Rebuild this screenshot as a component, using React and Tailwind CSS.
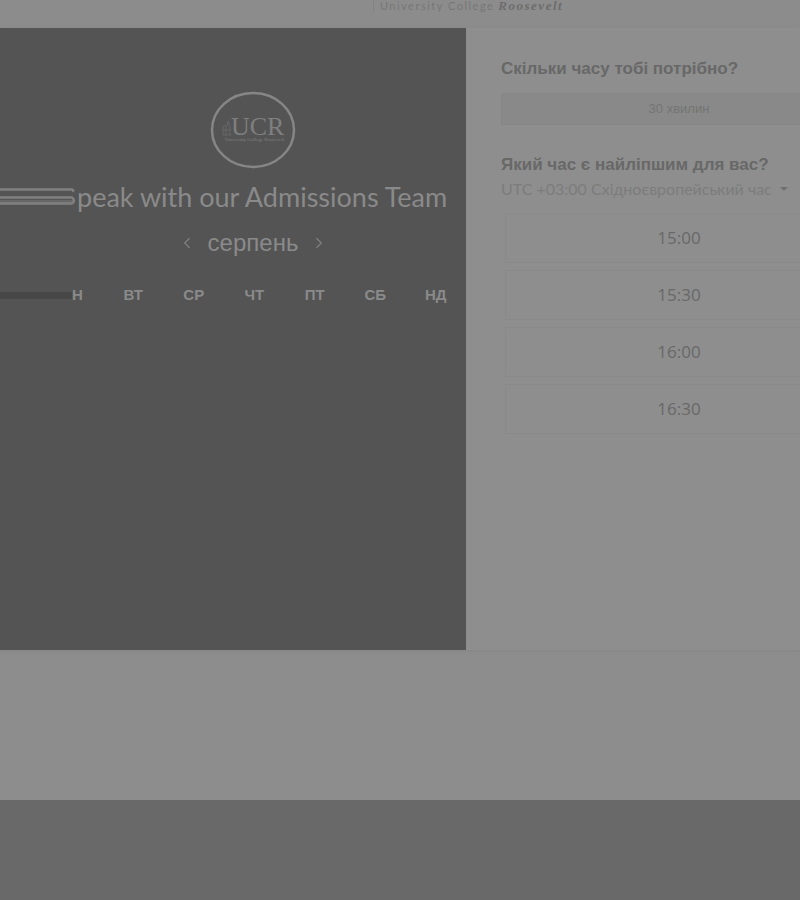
import { ChevronLeft, ChevronRight } from "lucide-react";

const weekdays = ["ВТ", "СР", "ЧТ", "ПТ", "СБ", "НД"];
const times = ["15:00", "15:30", "16:00", "16:30"];

function Seal() {
  return (
    <svg width="86" height="78" viewBox="0 0 86 78" role="img" aria-label="UCR">
      <ellipse cx="43" cy="39" rx="41" ry="37" fill="none" stroke="#868686" strokeWidth="2.5" />
      <path
        d="M13 44V36l2-2 1 2v8M17 35l1-5 2 5v9M13 39h8M13 44h8"
        fill="none"
        stroke="#6c6c6c"
        strokeWidth="0.8"
      />
      <text x="21" y="44" fontFamily="Liberation Serif, serif" fontSize="26" fill="#7f7f7f">
        UCR
      </text>
      <text x="15" y="50" fontFamily="Liberation Serif, serif" fontSize="5" fill="#808080">
        University College Roosevelt
      </text>
    </svg>
  );
}

function Calendar() {
  return (
    <section className="overflow-hidden bg-[#545454] pt-[63px] text-[#8a8a8a]">
      <div className="flex justify-center pl-10">
        <Seal />
      </div>
      <div className="mt-3 flex h-8 items-center">
        <svg className="h-5 w-[77px] shrink-0" viewBox="0 0 77 20" aria-hidden="true">
          <path d="M0 14.5H73" stroke="#686868" strokeWidth="3" />
          <path d="M0 2.5H72l2 2M0 10.5H72q4 3 0 6H0" fill="none" stroke="#808080" strokeWidth="2.5" />
        </svg>
        <h1 className="whitespace-nowrap font-['Lato','Liberation_Sans',sans-serif] text-[27px] leading-8">
          peak with our Admissions Team
        </h1>
      </div>
      <div className="mt-[14px] flex h-8 items-center justify-center gap-3 pl-10">
        <button type="button" aria-label="Попередній місяць" className="text-[#7c7c7c]">
          <ChevronLeft size={18} />
        </button>
        <h2 className="text-2xl leading-8">серпень</h2>
        <button type="button" aria-label="Наступний місяць" className="text-[#7c7c7c]">
          <ChevronRight size={18} />
        </button>
      </div>
      <div className="mt-[26px] flex h-5 items-center text-[15px] font-bold">
        <div className="h-[7px] w-[72px] shrink-0 bg-[#474747]" />
        <span className="w-[31px] shrink-0">Н</span>
        <div className="grid flex-1 grid-cols-6 text-center">
          {weekdays.map((day) => (
            <span key={day}>{day}</span>
          ))}
        </div>
      </div>
    </section>
  );
}

function Booking() {
  return (
    <section className="overflow-hidden bg-[#8e8e8e] pl-[35px] pt-[29px] text-[#686868]">
      <div className="w-[356px]">
        <h2 className="text-[17px] font-bold leading-6">Скільки часу тобі потрібно?</h2>
        <button
          type="button"
          className="mt-3 h-8 w-full rounded-xs border border-[#868686] bg-[#898989] text-[13px] text-[#747474]"
        >
          30 хвилин
        </button>
        <h2 className="mt-7 text-[17px] font-bold leading-6">Який час є найліпшим для вас?</h2>
        <div className="flex h-6 items-center gap-2">
          <select
            aria-label="Часовий пояс"
            className="appearance-none bg-transparent font-['Lato','Liberation_Sans',sans-serif] text-base text-[#7c7c7c]"
          >
            <option>UTC +03:00 Східноєвропейський час</option>
          </select>
          <svg width="8" height="4" viewBox="0 0 8 4" aria-hidden="true">
            <path d="M0 0h8L4 4z" fill="#707070" />
          </svg>
        </div>
        <div className="mt-3 flex flex-col gap-[7px] px-1">
          {times.map((time) => (
            <button
              key={time}
              type="button"
              className="h-[50px] w-full rounded-xs border border-[#898989] font-['Open_Sans','Liberation_Sans',sans-serif] text-[17px] text-[#686868]"
            >
              {time}
            </button>
          ))}
        </div>
      </div>
    </section>
  );
}

export default function App() {
  return (
    <div className="min-h-screen overflow-hidden bg-[#8d8d8d] font-['Liberation_Sans',Arial,sans-serif]">
      <header className="flex h-7 justify-center bg-[#8c8c8c] pl-[136px]">
        <div className="flex h-3 items-center gap-1 border-l border-[#828282] pl-1.5 text-[#777777]">
          <span className="font-['Lato',sans-serif] text-[11px] leading-3 tracking-[1.5px]">University College</span>
          <span className="font-['Liberation_Serif',serif] text-[13px] font-bold italic leading-3 tracking-[1.5px] text-[#6c6c6c]">
            Roosevelt
          </span>
        </div>
      </header>
      <main className="grid min-h-[622px] grid-cols-[233fr_167fr] shadow-[0_1px_3px_#858585]">
        <Calendar />
        <Booking />
      </main>
      <footer className="mt-[150px] h-[100px] bg-[#696969]" />
    </div>
  );
}
